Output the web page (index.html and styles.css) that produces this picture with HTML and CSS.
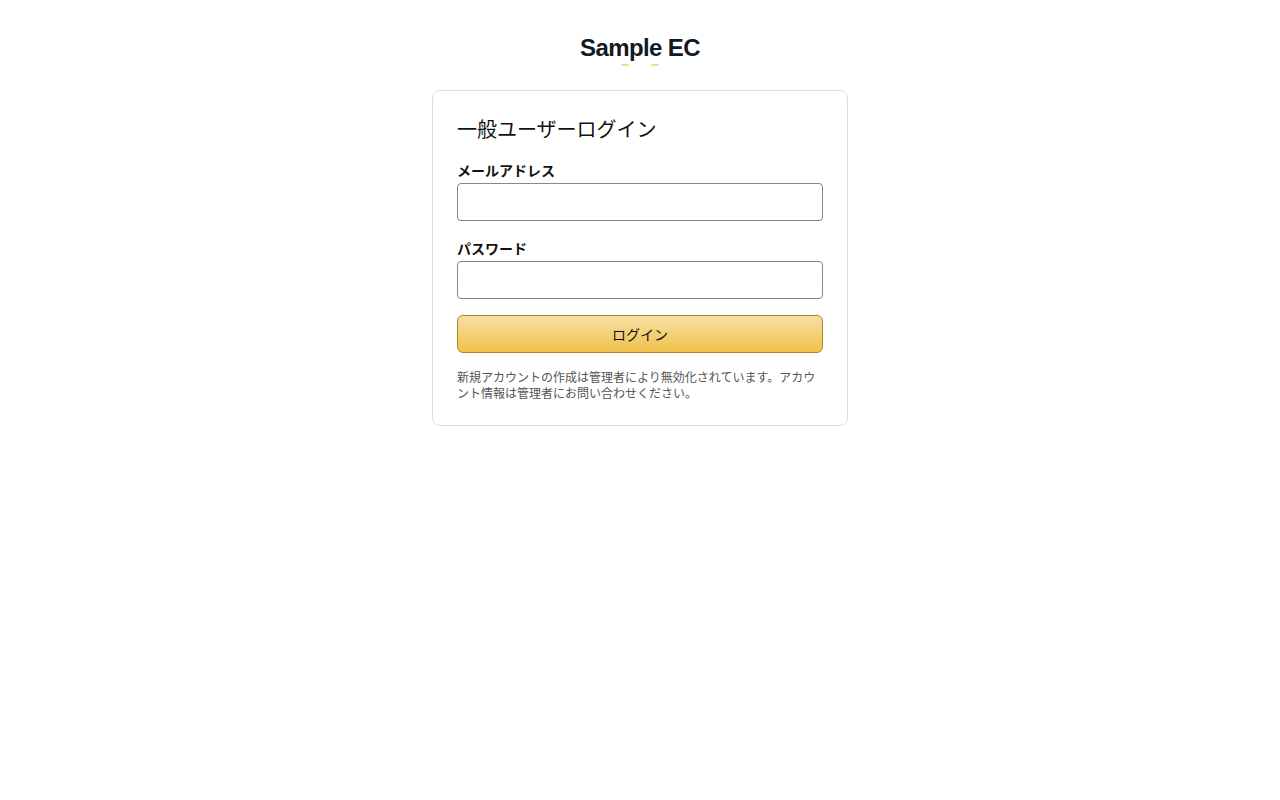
FILE: index.html
```html
<!DOCTYPE html>
<html lang="ja">
<head>
    <meta charset="UTF-8">
    <meta name="viewport" content="width=device-width, initial-scale=1.0">
    <title>Sample EC - ログイン</title>
    <link rel="stylesheet" href="styles.css">
</head>
<body>
    <header class="brand">
        <a href="#" class="logo">Sample EC</a>
        <span class="smile"></span>
    </header>

    <main class="login-box">
        <h1>一般ユーザーログイン</h1>
        <form>
            <label for="email">メールアドレス</label>
            <input type="email" id="email">

            <label for="password">パスワード</label>
            <input type="password" id="password">

            <button type="submit" class="btn-login">ログイン</button>
        </form>
        <p class="note">新規アカウントの作成は管理者により無効化されています。アカウント情報は管理者にお問い合わせください。</p>
    </main>
</body>
</html>
```

FILE: styles.css
```css
* {
    margin: 0;
    padding: 0;
    box-sizing: border-box;
}

body {
    font-family: "Liberation Sans", Arial, "Noto Sans CJK JP", sans-serif;
    color: #111;
    background: #fff;
}

/* Logo */
.brand {
    display: flex;
    flex-direction: column;
    align-items: center;
    padding-top: 34px;
}

.logo {
    font-size: 24px;
    line-height: 28px;
    font-weight: bold;
    letter-spacing: -0.6px;
    color: #131921;
    text-decoration: none;
}

.smile {
    display: block;
    width: 38px;
    height: 2px;
    margin-top: 2px;
    background: linear-gradient(to right, transparent 0, #f5d58f 4%, #f5d58f 18%, transparent 22%, transparent 78%, #f5d58f 82%, #f5d58f 96%, transparent 100%);
}

/* Login box */
.login-box {
    width: 416px;
    margin: 24px auto 0;
    padding: 24px 24px 23px;
    border: 1px solid #ddd;
    border-radius: 8px;
}

.login-box h1 {
    font-size: 20px;
    line-height: 28px;
    font-weight: normal;
    margin: 1px 0 17px;
}

.login-box label {
    display: block;
    font-size: 14px;
    line-height: 20px;
    font-weight: bold;
    margin-bottom: 2px;
}

.login-box input {
    display: block;
    width: 100%;
    height: 38px;
    border: 1px solid #888;
    border-radius: 4px;
    padding: 0 8px;
    font-size: 14px;
    margin-bottom: 18px;
}

.btn-login {
    display: block;
    width: 100%;
    height: 38px;
    margin-top: -2px;
    border: 1px solid #a88734;
    border-radius: 6px;
    background: linear-gradient(to bottom, #f7dfa5, #f0c14b);
    font-family: inherit;
    font-size: 14px;
    color: #111;
    cursor: pointer;
}

.note {
    margin-top: 17px;
    font-size: 12px;
    line-height: 16px;
    color: #555;
}
```
